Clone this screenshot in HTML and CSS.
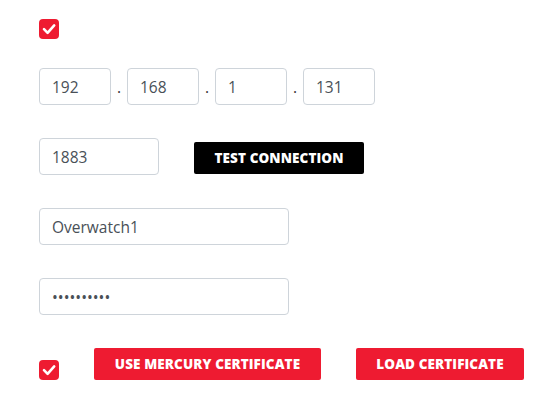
FILE: index.html
```html
<!DOCTYPE html>
<html>
<head>
<meta charset="utf-8">
<link rel="stylesheet" href="styles.css">
</head>
<body>
<div class="form">
  <div class="check-row">
    <span class="check"><svg viewBox="0 0 20 20" width="20" height="20"><path d="M5 10.2 L8.6 13.8 L15.2 6.4" fill="none" stroke="#fff" stroke-width="2.6" stroke-linecap="round" stroke-linejoin="round"/></svg></span>
  </div>
  <div class="ip-row">
    <input class="field ip" type="text" value="192">
    <span class="dot">.</span>
    <input class="field ip" type="text" value="168">
    <span class="dot">.</span>
    <input class="field ip" type="text" value="1">
    <span class="dot">.</span>
    <input class="field ip" type="text" value="131">
  </div>
  <div class="port-row">
    <input class="field port" type="text" value="1883">
    <button class="btn btn-dark">TEST CONNECTION</button>
  </div>
  <div class="row">
    <input class="field wide" type="text" value="Overwatch1">
  </div>
  <div class="row">
    <input class="field wide pw" type="password" value="abcdefghij">
  </div>
  <div class="bottom-row">
    <span class="check"><svg viewBox="0 0 20 20" width="20" height="20"><path d="M5 10.2 L8.6 13.8 L15.2 6.4" fill="none" stroke="#fff" stroke-width="2.6" stroke-linecap="round" stroke-linejoin="round"/></svg></span>
    <button class="btn btn-red mercury">USE MERCURY CERTIFICATE</button>
    <button class="btn btn-red load">LOAD CERTIFICATE</button>
  </div>
</div>
</body>
</html>
```

FILE: styles.css
```css
html, body {
  margin: 0;
  padding: 0;
  background: #fff;
}
body {
  font-family: "Open Sans", "DejaVu Sans", sans-serif;
}
.form {
  display: flex;
  flex-direction: column;
  padding: 19px 0 0 39px;
}
.check-row {
  height: 20px;
  display: flex;
}
.check {
  width: 20px;
  height: 20px;
  border-radius: 4px;
  background: #ee1b31;
  display: flex;
  align-items: center;
  justify-content: center;
  flex: none;
}
.check svg {
  display: block;
}
.ip-row {
  margin-top: 29px;
  display: flex;
  align-items: baseline;
}
.field {
  box-sizing: border-box;
  height: 37px;
  border: 1px solid #ced4da;
  border-radius: 4px;
  padding: 0 12px;
  font-family: "Open Sans", sans-serif;
  font-size: 15.5px;
  color: #495057;
  background: #fff;
  outline: none;
  margin: 0;
}
.ip {
  width: 72px;
}
.dot {
  width: 16px;
  text-align: center;
  font-size: 15.5px;
  color: #333;
}
.port-row {
  margin-top: 33px;
  display: flex;
  align-items: center;
  gap: 35px;
}
.port {
  width: 120px;
}
.btn {
  height: 32px;
  border: none;
  border-radius: 2px;
  color: #fff;
  font-family: "Open Sans", sans-serif;
  font-weight: 800;
  font-size: 13.5px;
  letter-spacing: 0.1px;
  padding: 0;
  margin: 0;
  cursor: pointer;
}
.btn-dark {
  background: #000;
  width: 170px;
  margin-top: 3px;
}
.row {
  margin-top: 33px;
  display: flex;
}
.wide {
  width: 250px;
}
.pw {
  letter-spacing: 0;
}
.bottom-row {
  margin-top: 33px;
  display: flex;
  align-items: flex-end;
  gap: 35px;
}
.btn-red {
  background: #ee1b31;
}
.mercury {
  width: 227px;
}
.load {
  width: 168px;
}
```
